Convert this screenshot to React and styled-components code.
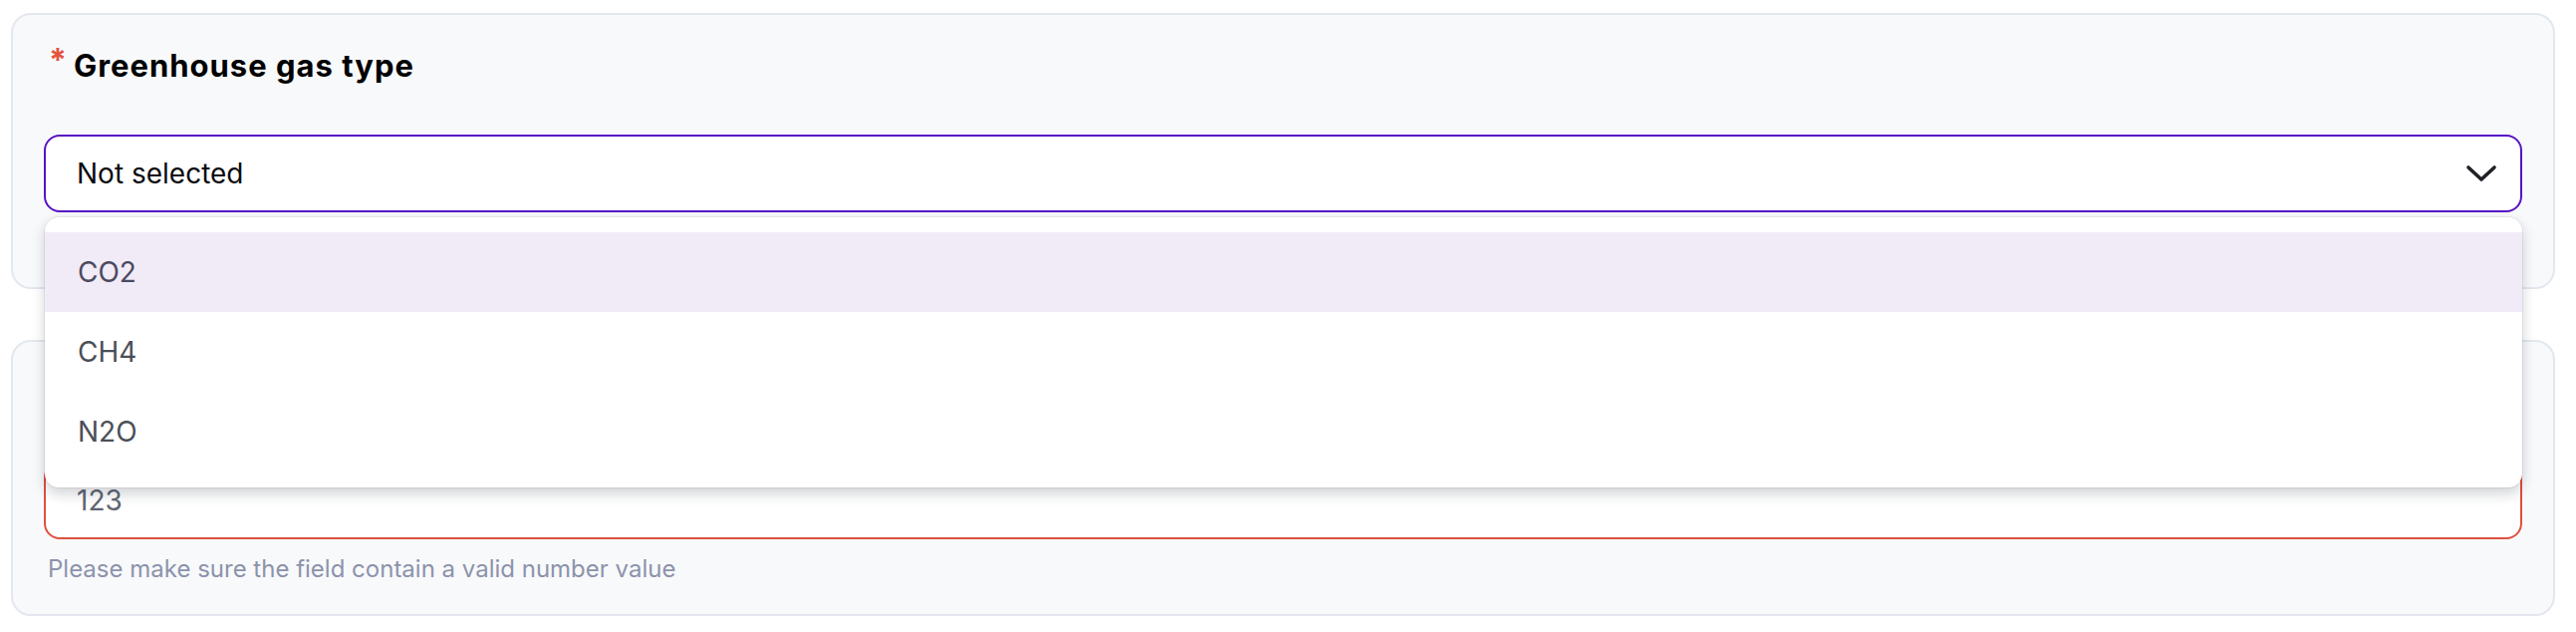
import React from 'react';
import styled, { createGlobalStyle } from 'styled-components';

const GlobalStyle = createGlobalStyle`
  html, body {
    margin: 0;
    background: #ffffff;
    font-family: "Inter", "Liberation Sans", sans-serif;
  }
`;

const Page = styled.div`
  display: flex;
  flex-direction: column;
  gap: 51px;
  padding: 13px 21px 0 11px;
`;

const Card = styled.section`
  background: #f8f9fb;
  border: 2px solid #e3e7ee;
  border-radius: 20px;
  padding: 28px 31px 27px;
`;

const Label = styled.div`
  display: flex;
  align-items: flex-start;
  gap: 7px;
  height: 45px;
  margin-bottom: 47px;
  padding-left: 5px;
  font-family: "Inter", sans-serif;
  font-size: 31px;
  line-height: 45px;
  font-weight: 700;
  letter-spacing: 1px;
  color: #000000;
`;

const Star = styled.span`
  color: #e5533f;
  font-size: 32px;
  line-height: 36px;
  font-weight: 700;
  letter-spacing: 0;
`;

const FieldWrap = styled.div`
  position: relative;
`;

const Box = styled.div`
  display: flex;
  align-items: center;
  justify-content: space-between;
  box-sizing: border-box;
  height: 78px;
  padding: 0 23px 0 31px;
  background: #ffffff;
  border: 2px solid ${(p) => (p.$error ? '#e0503f' : '#5712c4')};
  border-radius: 16px;
  font-size: 28px;
  color: ${(p) => (p.$muted ? '#5f6673' : '#0b0b0f')};
`;

const Menu = styled.ul`
  position: absolute;
  top: calc(100% + 5px);
  left: 1px;
  right: 0;
  z-index: 10;
  margin: 0;
  padding: 15px 0 16px;
  list-style: none;
  background: #ffffff;
  border-radius: 14px;
  box-shadow: 0 0 0 1px rgba(16, 24, 40, 0.06), 0 6px 14px rgba(16, 24, 40, 0.2);
`;

const Option = styled.li`
  display: flex;
  align-items: center;
  height: 80px;
  padding-left: 33px;
  font-size: 28px;
  color: ${(p) => (p.$active ? '#4b4a5e' : '#4a4f58')};
  background: ${(p) => (p.$active ? '#f1ebf8' : 'transparent')};
`;

const Help = styled.div`
  margin-top: 12px;
  height: 36px;
  padding-left: 4px;
  font-size: 24px;
  line-height: 36px;
  color: #8c93ab;
`;

const Chevron = () => (
  <svg width="32" height="18" viewBox="0 0 32 18" fill="none">
    <polyline
      points="3,3 16,15 29,3"
      stroke="#1f2126"
      strokeWidth="3.6"
      strokeLinecap="round"
      strokeLinejoin="round"
    />
  </svg>
);

const options = ['CO2', 'CH4', 'N2O'];

export default function App() {
  return (
    <>
      <GlobalStyle />
      <Page>
        <Card>
          <Label>
            <Star>*</Star>
            <span>Greenhouse gas type</span>
          </Label>
          <FieldWrap>
            <Box>
              <span>Not selected</span>
              <Chevron />
            </Box>
            <Menu>
              {options.map((o, i) => (
                <Option key={o} $active={i === 0}>{o}</Option>
              ))}
            </Menu>
          </FieldWrap>
          <Help />
        </Card>
        <Card>
          <Label>
            <Star>*</Star>
            <span>Emission amount</span>
          </Label>
          <FieldWrap>
            <Box $error $muted>
              <span>123</span>
            </Box>
          </FieldWrap>
          <Help>Please make sure the field contain a valid number value</Help>
        </Card>
      </Page>
    </>
  );
}
